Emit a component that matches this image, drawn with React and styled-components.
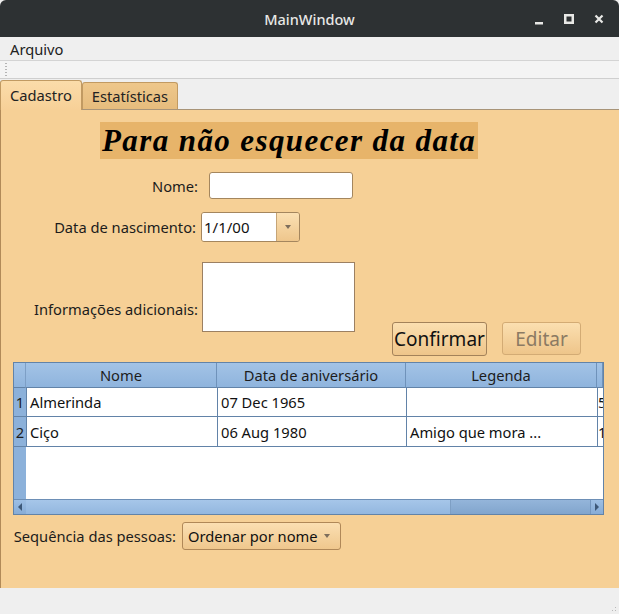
import styled, { createGlobalStyle } from 'styled-components';

const GlobalStyle = createGlobalStyle`
  html, body {
    margin: 0;
    padding: 0;
    background: #efefef;
  }
  body {
    font-family: "Noto Sans", "Open Sans", sans-serif;
    font-size: 14.7px;
    color: #1a1a1a;
  }
`;

const Window = styled.div`
  width: 619px;
  height: 614px;
  display: flex;
  flex-direction: column;
  background: #efefef;
  overflow: hidden;
`;

const TitleBar = styled.div`
  height: 37px;
  flex: none;
  background: #2d3133;
  border-radius: 6px 6px 0 0;
  display: flex;
  align-items: center;
  justify-content: center;
  position: relative;
  color: #e8e8e6;
  font-size: 14.5px;
  font-weight: 500;
`;

const WinControls = styled.div`
  position: absolute;
  right: 14px;
  top: 0;
  height: 37px;
  display: flex;
  align-items: center;
  gap: 18px;
`;

const WinButton = styled.span`
  width: 12px;
  height: 12px;
  display: flex;
  align-items: center;
  justify-content: center;
`;

const MenuBar = styled.div`
  height: 23px;
  flex: none;
  display: flex;
  align-items: center;
  padding-left: 10px;
  font-size: 14.7px;
  color: #222;
  border-bottom: 1px solid #d4d4d4;
`;

const ToolBar = styled.div`
  height: 17px;
  flex: none;
  background: #f4f4f4;
  border-bottom: 1px solid #cfcfcf;
  display: flex;
  align-items: center;
  padding-left: 5px;
`;

const Grip = styled.div`
  width: 2px;
  height: 16px;
  background-image: radial-gradient(circle, #b4b4b4 0.6px, transparent 0.8px);
  background-size: 2px 3px;
`;

const TabBar = styled.div`
  height: 31px;
  flex: none;
  display: flex;
  align-items: flex-end;
  padding-top: 2px;
  box-sizing: border-box;
  border-bottom: 1px solid #a89478;
  position: relative;
  z-index: 1;
`;

const Tab = styled.div`
  height: ${({ $active }) => ($active ? 30 : 27)}px;
  padding: 0 9px;
  box-sizing: border-box;
  display: flex;
  align-items: center;
  font-size: 14.7px;
  color: #222;
  border: 1px solid #c19a62;
  border-bottom: none;
  border-radius: 3px 3px 0 0;
  background: ${({ $active }) =>
    $active
      ? 'linear-gradient(#fbdcaa, #f7d097)'
      : 'linear-gradient(#eec78b, #e6bc7d)'};
  margin-bottom: ${({ $active }) => ($active ? -1 : 0)}px;
  padding-bottom: ${({ $active }) => ($active ? 1 : 0)}px;
`;

const Pane = styled.div`
  flex: 1;
  background: #f6d096;
  border-left: 1px solid #b18a58;
  display: flex;
  flex-direction: column;
  padding-top: 12px;
`;

const Heading = styled.div`
  align-self: flex-start;
  margin-left: 99px;
  height: 37px;
  padding: 0 2px;
  display: flex;
  align-items: center;
  background: #e7b46a;
  font-family: "Liberation Serif", "DejaVu Serif", serif;
  font-weight: bold;
  font-style: italic;
  font-size: 31px;
  letter-spacing: 1.4px;
  color: #000;
`;

const FormRow = styled.div`
  display: flex;
  align-items: ${({ $align }) => $align || 'center'};
  margin-top: ${({ $top }) => $top}px;
`;

const Label = styled.span`
  width: ${({ $w }) => $w}px;
  flex: none;
  text-align: right;
  white-space: nowrap;
  font-size: 14.7px;
  color: #1c1c1c;
  margin-right: ${({ $gap }) => $gap}px;
  align-self: center;
`;

const TextInput = styled.div`
  width: 144px;
  height: 27px;
  box-sizing: border-box;
  background: #fff;
  border: 1px solid #a4865e;
  border-radius: 3px;
`;

const DateEdit = styled.div`
  width: 99px;
  height: 30px;
  box-sizing: border-box;
  display: flex;
  border: 1px solid #a4865e;
  border-radius: 3px;
  overflow: hidden;
`;

const DateText = styled.div`
  flex: 1;
  background: #fff;
  display: flex;
  align-items: center;
  padding-left: 2px;
  font-size: 15px;
  color: #111;
`;

const DropButton = styled.div`
  width: 22px;
  border-left: 1px solid #c6a577;
  background: linear-gradient(#fbe0b3, #eec68c);
  display: flex;
  align-items: center;
  justify-content: center;
`;

const Arrow = styled.span`
  flex: none;
  width: 0;
  height: 0;
  border-left: 3.5px solid transparent;
  border-right: 3.5px solid transparent;
  border-top: 4px solid #7d6e5c;
`;

const TextArea = styled.div`
  width: 153px;
  height: 70px;
  box-sizing: border-box;
  background: #fff;
  border: 1px solid #9c8062;
`;

const ButtonGroup = styled.div`
  display: flex;
  gap: 15px;
  margin-top: 60px;
  margin-left: 37px;
`;

const Button = styled.div`
  height: ${({ $h }) => $h}px;
  width: ${({ $w }) => $w}px;
  box-sizing: border-box;
  display: flex;
  align-items: center;
  justify-content: center;
  border: 1px solid ${({ $disabled }) => ($disabled ? '#d3ab74' : '#a3825a')};
  border-radius: 3px;
  background: linear-gradient(#fbdfb0, #eec58a);
  font-size: 19px;
  color: ${({ $disabled }) => ($disabled ? '#8b7a63' : '#111')};
`;

const TableFrame = styled.div`
  margin: 6px 0 0 12px;
  width: 591px;
  height: 153px;
  box-sizing: border-box;
  border: 1px solid #6283a8;
  background: #fff;
  display: flex;
  flex-direction: column;
  overflow: hidden;
`;

const Grid = styled.div`
  flex: 1;
  display: grid;
  grid-template-columns: 12px 191px 189px 191px 1fr;
  grid-template-rows: 25px 29px 30px 1fr;
  overflow: hidden;
`;

const HeadCell = styled.div`
  background: linear-gradient(#a3c3e6, #8fb4dd);
  border-right: 1px solid ${({ $edge }) => ($edge ? '#7d9fc6' : '#6f92ba')};
  border-bottom: 1px solid #6283a8;
  display: flex;
  align-items: center;
  justify-content: center;
  font-size: 14.7px;
  color: #1d1d1d;
  white-space: nowrap;
  overflow: hidden;
`;

const RowHead = styled.div`
  background: #8cb1da;
  border-bottom: ${({ $last }) => ($last ? 'none' : '1px solid #6283a8')};
  display: flex;
  align-items: center;
  justify-content: center;
  font-size: 14.7px;
  color: #1d1d1d;
`;

const Cell = styled.div`
  border-left: 1px solid #6283a8;
  border-bottom: 1px solid #6283a8;
  display: flex;
  align-items: center;
  padding-left: ${({ $tight }) => ($tight ? 0 : 3)}px;
  font-size: 14.7px;
  color: #111;
  white-space: nowrap;
  overflow: hidden;
`;

const Empty = styled.div`
  grid-column: 2 / -1;
`;

const HScroll = styled.div`
  height: 14px;
  flex: none;
  display: flex;
  border-top: 1px solid #6d8fb6;
  background: linear-gradient(#9dbfe4, #87acd6);
`;

const ScrollArrow = styled.div`
  width: 12px;
  display: flex;
  align-items: center;
  justify-content: center;
  border-left: ${({ $right }) => ($right ? '1px solid #7597bf' : 'none')};
`;

const Tri = styled.span`
  width: 0;
  height: 0;
  border-top: 4px solid transparent;
  border-bottom: 4px solid transparent;
  ${({ $dir }) =>
    $dir === 'left'
      ? 'border-right: 4px solid #3d5878;'
      : 'border-left: 4px solid #3d5878;'}
`;

const Thumb = styled.div`
  width: 424px;
  background: linear-gradient(#a6c6e9, #93b7df);
`;

const Track = styled.div`
  flex: 1;
  background: linear-gradient(#94b5da, #81a5cd);
  border-left: 1px solid #7e9fc4;
`;

const Combo = styled.div`
  width: 159px;
  height: 28px;
  box-sizing: border-box;
  display: flex;
  align-items: center;
  justify-content: space-between;
  padding: 0 10px 0 5px;
  border: 1px solid #b08858;
  border-radius: 3px;
  background: linear-gradient(#fbdfb2, #efc78d);
  font-size: 14.7px;
  color: #111;
  white-space: nowrap;
`;

const StatusBar = styled.div`
  height: 26px;
  flex: none;
  background: #efefef;
  position: relative;
`;

const SizeGrip = styled.div`
  position: absolute;
  right: 1px;
  bottom: 1px;
  width: 10px;
  height: 10px;
  background-image: radial-gradient(circle, #b9b9b9 0.7px, transparent 0.9px);
  background-size: 3px 3px;
  clip-path: polygon(100% 0, 100% 100%, 0 100%);
`;

const rows = [
  { n: 1, nome: 'Almerinda', data: '07 Dec 1965', legenda: '', extra: '5' },
  { n: 2, nome: 'Ciço', data: '06 Aug 1980', legenda: 'Amigo que mora ...', extra: '1' },
];

export default function App() {
  return (
    <>
      <GlobalStyle />
      <Window>
        <TitleBar>
          MainWindow
          <WinControls>
            <WinButton>
              <svg width="10" height="12" viewBox="0 0 10 12">
                <rect x="1" y="9" width="8" height="2.5" fill="#e8e8e6" />
              </svg>
            </WinButton>
            <WinButton>
              <svg width="10" height="10" viewBox="0 0 10 10">
                <rect x="1.25" y="1.25" width="7.5" height="7.5" fill="none" stroke="#e8e8e6" strokeWidth="2.5" />
              </svg>
            </WinButton>
            <WinButton>
              <svg width="10" height="10" viewBox="0 0 10 10">
                <path d="M1.5 1.5 L8.5 8.5 M8.5 1.5 L1.5 8.5" stroke="#e8e8e6" strokeWidth="2.2" />
              </svg>
            </WinButton>
          </WinControls>
        </TitleBar>
        <MenuBar>Arquivo</MenuBar>
        <ToolBar>
          <Grip />
        </ToolBar>
        <TabBar>
          <Tab $active>Cadastro</Tab>
          <Tab>Estatísticas</Tab>
        </TabBar>
        <Pane>
          <Heading>Para não esquecer da data</Heading>
          <FormRow $top={13}>
            <Label $w={197} $gap={11}>Nome:</Label>
            <TextInput />
          </FormRow>
          <FormRow $top={13}>
            <Label $w={195} $gap={5}>Data de nascimento:</Label>
            <DateEdit>
              <DateText>1/1/00</DateText>
              <DropButton>
                <Arrow />
              </DropButton>
            </DateEdit>
          </FormRow>
          <FormRow $top={20} $align="flex-start">
            <Label $w={197} $gap={4}>Informações adicionais:</Label>
            <TextArea />
            <ButtonGroup>
              <Button $w={95} $h={34}>Confirmar</Button>
              <Button $w={79} $h={33} $disabled>Editar</Button>
            </ButtonGroup>
          </FormRow>
          <TableFrame>
            <Grid>
              <HeadCell $edge />
              <HeadCell>Nome</HeadCell>
              <HeadCell>Data de aniversário</HeadCell>
              <HeadCell>Legenda</HeadCell>
              <HeadCell />
              {rows.map((r) => (
                <>
                  <RowHead key={`h${r.n}`}>{r.n}</RowHead>
                  <Cell key={`a${r.n}`}>{r.nome}</Cell>
                  <Cell key={`b${r.n}`}>{r.data}</Cell>
                  <Cell key={`c${r.n}`}>{r.legenda}</Cell>
                  <Cell key={`d${r.n}`} $tight>{r.extra}</Cell>
                </>
              ))}
              <RowHead $last />
              <Empty />
            </Grid>
            <HScroll>
              <ScrollArrow>
                <Tri $dir="left" />
              </ScrollArrow>
              <Thumb />
              <Track />
              <ScrollArrow $right>
                <Tri $dir="right" />
              </ScrollArrow>
            </HScroll>
          </TableFrame>
          <FormRow $top={7}>
            <Label $w={175} $gap={6}>Sequência das pessoas:</Label>
            <Combo>
              Ordenar por nome
              <Arrow />
            </Combo>
          </FormRow>
        </Pane>
        <StatusBar>
          <SizeGrip />
        </StatusBar>
      </Window>
    </>
  );
}
